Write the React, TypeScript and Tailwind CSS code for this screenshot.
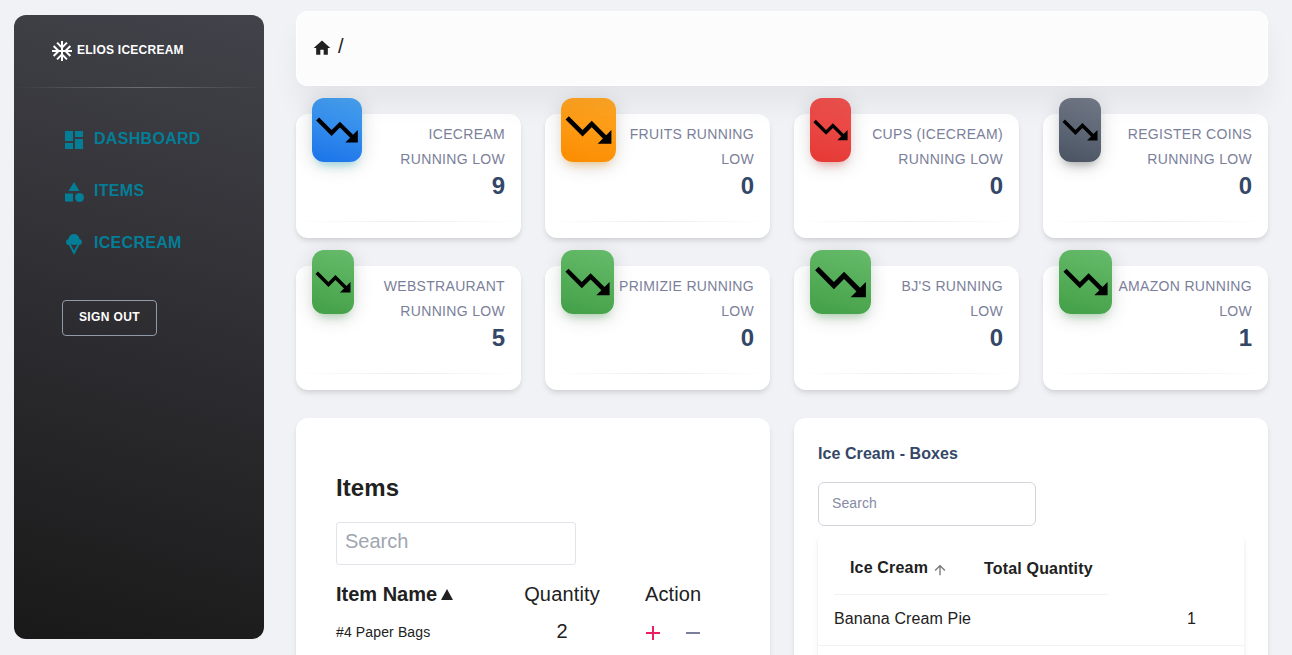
import type { ReactNode } from "react";
import {
  MdAcUnit,
  MdAdd,
  MdArrowUpward,
  MdCategory,
  MdDashboard,
  MdHome,
  MdIcecream,
  MdRemove,
} from "react-icons/md";

type Stat = {
  lines: [string, string];
  value: number;
  badge: string;
};

const stats: Stat[] = [
  {
    lines: ["ICECREAM", "RUNNING LOW"],
    value: 9,
    badge:
      "w-[50px] bg-[linear-gradient(195deg,#49a3f1,#1a73e8)] shadow-[0_4px_20px_0_rgba(0,0,0,0.14),0_7px_10px_-5px_rgba(0,187,212,0.4)]",
  },
  {
    lines: ["FRUITS RUNNING", "LOW"],
    value: 0,
    badge:
      "w-[55px] bg-[linear-gradient(195deg,#ffa726,#fb8c00)] shadow-[0_4px_20px_0_rgba(0,0,0,0.14),0_7px_10px_-5px_rgba(255,152,0,0.4)]",
  },
  {
    lines: ["CUPS (ICECREAM)", "RUNNING LOW"],
    value: 0,
    badge:
      "w-[41px] bg-[linear-gradient(195deg,#ef5350,#e53935)] shadow-[0_4px_20px_0_rgba(0,0,0,0.14),0_7px_10px_-5px_rgba(244,67,54,0.4)]",
  },
  {
    lines: ["REGISTER COINS", "RUNNING LOW"],
    value: 0,
    badge:
      "w-[42px] bg-[linear-gradient(195deg,#747b8a,#495361)] shadow-[0_4px_20px_0_rgba(0,0,0,0.14),0_7px_10px_-5px_rgba(64,64,64,0.4)]",
  },
  {
    lines: ["WEBSTRAURANT", "RUNNING LOW"],
    value: 5,
    badge:
      "w-[42px] bg-[linear-gradient(195deg,#66bb6a,#43a047)] shadow-[0_4px_20px_0_rgba(0,0,0,0.14),0_7px_10px_-5px_rgba(76,175,80,0.4)]",
  },
  {
    lines: ["PRIMIZIE RUNNING", "LOW"],
    value: 0,
    badge:
      "w-[53px] bg-[linear-gradient(195deg,#66bb6a,#43a047)] shadow-[0_4px_20px_0_rgba(0,0,0,0.14),0_7px_10px_-5px_rgba(76,175,80,0.4)]",
  },
  {
    lines: ["BJ'S RUNNING", "LOW"],
    value: 0,
    badge:
      "w-[61px] bg-[linear-gradient(195deg,#66bb6a,#43a047)] shadow-[0_4px_20px_0_rgba(0,0,0,0.14),0_7px_10px_-5px_rgba(76,175,80,0.4)]",
  },
  {
    lines: ["AMAZON RUNNING", "LOW"],
    value: 1,
    badge:
      "w-[53px] bg-[linear-gradient(195deg,#66bb6a,#43a047)] shadow-[0_4px_20px_0_rgba(0,0,0,0.14),0_7px_10px_-5px_rgba(76,175,80,0.4)]",
  },
];

function StatCard({ lines, value, badge }: Stat) {
  return (
    <div className="h-[124px] rounded-xl bg-white shadow-[0_4px_6px_-1px_rgba(0,0,0,0.1),0_2px_4px_-1px_rgba(0,0,0,0.06)]">
      <div className="flex h-[90px] items-start justify-between px-4">
        <div className={`-mt-4 h-16 shrink-0 rounded-xl ${badge}`}>
          <svg viewBox="0 0 24 24" className="h-full w-full" fill="#000">
            <path d="m16 18 2.29-2.29-4.88-4.88-4 4L2 7.41 3.41 6l6 6 4-4 6.3 6.29L22 12v6z" />
          </svg>
        </div>
        <div className="pt-2 text-right">
          <p className="text-sm leading-[25px] font-light tracking-[0.32px] whitespace-nowrap text-[#7b809a]">
            {lines[0]}
            <br />
            {lines[1]}
          </p>
          <p className="-mt-px text-2xl leading-[30px] font-bold text-[#344767]">{value}</p>
        </div>
      </div>
      <div className="mt-[17px] h-px bg-[linear-gradient(to_right,rgba(52,71,103,0),rgba(52,71,103,0.4),rgba(52,71,103,0))] opacity-25" />
    </div>
  );
}

function NavItem({ icon, label }: { icon: ReactNode; label: string }) {
  return (
    <a className="flex h-[52px] items-center gap-2 text-[#047e97]">
      <span className="mt-0.5 text-[24px]">{icon}</span>
      <span className="text-base font-bold tracking-[0.3px]">{label}</span>
    </a>
  );
}

export default function App() {
  return (
    <div className="flex h-[655px] w-full overflow-hidden bg-[#f0f2f5] font-['Liberation_Sans',Arial,sans-serif] text-[#212121]">
      <aside className="mt-[15px] ml-[14px] h-[624px] w-[250px] shrink-0 rounded-xl bg-[linear-gradient(195deg,#42424a,#191919)]">
        <div className="flex h-[72px] items-center gap-[3px] pl-9 text-white">
          <MdAcUnit className="text-[24px]" />
          <span className="-mt-[3px] text-xs font-bold tracking-[0.25px]">ELIOS ICECREAM</span>
        </div>
        <div className="h-px bg-[linear-gradient(to_right,rgba(255,255,255,0),#fff,rgba(255,255,255,0))] opacity-25" />
        <nav className="pt-[25px] pl-12">
          <NavItem icon={<MdDashboard />} label="DASHBOARD" />
          <NavItem icon={<MdCategory />} label="ITEMS" />
          <NavItem icon={<MdIcecream />} label="ICECREAM" />
        </nav>
        <button className="mt-[31px] ml-12 h-9 w-[95px] rounded-[4px] border border-[#8f9ba8] pb-0.5 text-xs font-bold tracking-[0.4px] text-white">
          SIGN OUT
        </button>
      </aside>

      <main className="ml-8 flex w-[972px] shrink-0 flex-col pt-[11px]">
        <header className="relative z-10 flex h-[75px] shrink-0 items-center rounded-xl bg-white/80 pb-0.5 pl-4 shadow-[inset_0_0_1px_1px_rgba(255,255,255,0.9),0_20px_27px_0_rgba(0,0,0,0.05)]">
          <MdHome className="text-[20px]" />
          <span className="-mt-1 ml-1.5 text-xl leading-6 font-light">/</span>
        </header>

        <section className="mt-7 grid shrink-0 grid-cols-4 gap-x-6 gap-y-7">
          {stats.map((s) => (
            <StatCard key={s.lines.join(" ")} {...s} />
          ))}
        </section>

        <section className="mt-7 grid h-[300px] shrink-0 grid-cols-2 gap-6">
          <div className="rounded-xl bg-white px-10 pt-[52px] shadow-[0_4px_6px_-1px_rgba(0,0,0,0.1),0_2px_4px_-1px_rgba(0,0,0,0.06)]">
            <h2 className="text-2xl leading-9 font-bold tracking-[0.1px]">Items</h2>
            <input
              placeholder="Search"
              className="mt-4 block h-[43px] w-60 rounded-[3px] border border-[#e2e3e8] px-2 pb-1 text-xl placeholder:text-[#a0a6b1]"
            />
            <div className="mt-3.5 grid grid-cols-[162px_128px_1fr] text-xl leading-[30px]">
              <div className="flex items-center gap-1 font-bold">
                Item Name
                <svg viewBox="0 0 12 11" className="h-[11px] w-3" fill="#212121">
                  <path d="M6 0l6 11H0z" />
                </svg>
              </div>
              <div className="text-center tracking-[0.15px]">Quantity</div>
              <div className="pl-[19px] tracking-[0.1px]">Action</div>
            </div>
            <div className="mt-[7px] grid grid-cols-[162px_128px_1fr] items-center text-xl leading-[30px]">
              <div className="pt-0.5 text-sm tracking-[0.13px]">#4 Paper Bags</div>
              <div className="text-center">2</div>
              <div className="flex gap-4 pt-1 pl-[15px] text-[24px]">
                <MdAdd className="text-[#e91e63]" />
                <MdRemove className="text-[#7b809a]" />
              </div>
            </div>
          </div>

          <div className="rounded-xl bg-white px-6 pt-[25px] shadow-[0_4px_6px_-1px_rgba(0,0,0,0.1),0_2px_4px_-1px_rgba(0,0,0,0.06)]">
            <h3 className="text-base leading-[22px] font-bold tracking-[0.07px] text-[#344767]">Ice Cream - Boxes</h3>
            <input
              placeholder="Search"
              className="mt-[17px] block h-11 w-[218px] rounded-md border border-[#d2d6da] px-[13px] pb-0.5 text-sm tracking-[0.1px] placeholder:text-[#868ba3]"
            />
            <div className="mt-1 h-[190px] rounded-xl bg-white shadow-[0_4px_6px_-1px_rgba(0,0,0,0.1),0_2px_4px_-1px_rgba(0,0,0,0.06)]">
              <div className="ml-4 flex h-[65px] w-[274px] items-center border-b border-[#f0f2f5] pt-3 pl-4 text-base font-bold">
                <span className="tracking-[0.17px]">Ice Cream</span>
                <MdArrowUpward className="mt-[3px] ml-1 text-base text-[#757575]" />
                <span className="mt-px ml-9 tracking-[0.17px]">Total Quantity</span>
              </div>
              <div className="flex h-[51px] items-center justify-between border-b border-[#f0f2f5] pr-12 pb-0.5 pl-4 text-base">
                <span className="tracking-[0.12px]">Banana Cream Pie</span>
                <span>1</span>
              </div>
            </div>
          </div>
        </section>
      </main>
    </div>
  );
}
